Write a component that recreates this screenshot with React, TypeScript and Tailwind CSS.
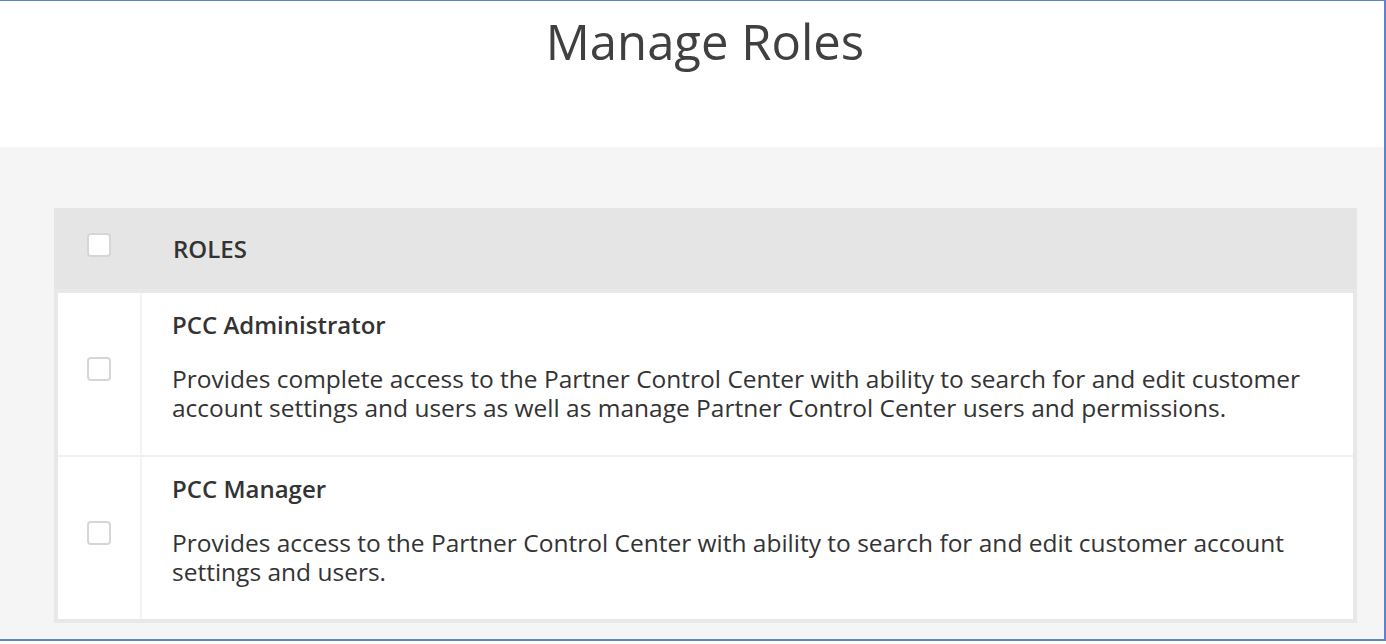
import { useState } from 'react'

const roles = [
  {
    name: 'PCC Administrator',
    description:
      'Provides complete access to the Partner Control Center with ability to search for and edit customer account settings and users as well as manage Partner Control Center users and permissions.',
  },
  {
    name: 'PCC Manager',
    description:
      'Provides access to the Partner Control Center with ability to search for and edit customer account settings and users.',
  },
]

function Box({ checked, onClick }: { checked: boolean; onClick: () => void }) {
  return (
    <button
      onClick={onClick}
      className={`w-6 h-6 rounded-[4px] border-2 ${checked ? 'bg-[#5b85c9] border-[#5b85c9]' : 'bg-white border-[#d6d6d6]'}`}
    />
  )
}

export default function App() {
  const [selected, setSelected] = useState<number[]>([])
  const toggle = (i: number) =>
    setSelected((s) => (s.includes(i) ? s.filter((x) => x !== i) : [...s, i]))

  return (
    <div
      className="h-[641px] bg-white border-t border-r-2 border-b-2 border-[#5b85c9] text-[#333]"
      style={{ fontFamily: '"Open Sans", sans-serif' }}
    >
      <div className="h-[146px] flex justify-center pl-[26px]">
        <h1 className="text-[49px] leading-[80px] text-[#404040]">Manage Roles</h1>
      </div>
      <div className="bg-[#f5f5f5] h-[492px] pt-[61px] pl-[54px] pr-[27px]">
        <div className="bg-[#e8e8e8] pb-[4px]">
          <div className="flex items-center h-[81px] bg-[#e5e5e5]">
            <div className="w-[88px] flex justify-center pl-[2px] -mt-[7px]">
              <Box
                checked={selected.length === roles.length}
                onClick={() => setSelected(selected.length === roles.length ? [] : roles.map((_, i) => i))}
              />
            </div>
            <div className="pl-[31px] text-[24px] font-semibold">ROLES</div>
          </div>
          <div className="mx-[4px] mt-[4px] bg-white">
            {roles.map((r, i) => (
              <div key={r.name} className={`flex ${i > 0 ? 'border-t-2 border-[#f0f0f0]' : ''}`}>
                <div className="w-[84px] shrink-0 flex items-center justify-center border-r-2 border-[#f3f3f3]">
                  <div className="-mt-[7px]">
                    <Box checked={selected.includes(i)} onClick={() => toggle(i)} />
                  </div>
                </div>
                <div className="pl-[30px] pr-[30px] pt-[17px] pb-[33px]">
                  <div className="text-[24px] font-semibold leading-[30px] mb-[24px]">{r.name}</div>
                  <p className="text-[24.5px] leading-[29px]">{r.description}</p>
                </div>
              </div>
            ))}
          </div>
        </div>
      </div>
    </div>
  )
}
